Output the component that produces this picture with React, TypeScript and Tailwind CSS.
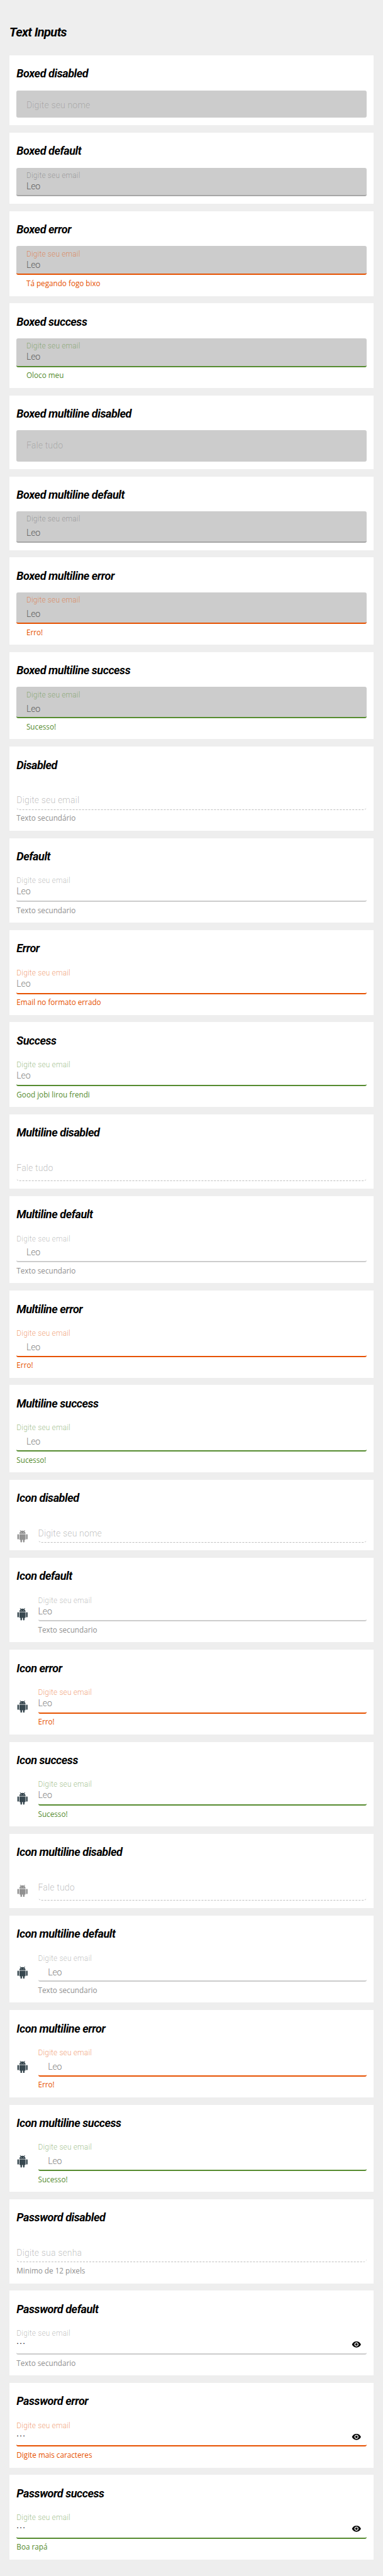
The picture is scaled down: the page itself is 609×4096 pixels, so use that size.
import { MdVisibility } from "react-icons/md";
import clsx from "clsx";

type Status = "disabled" | "default" | "error" | "success";

interface Field {
  title: string;
  status: Status;
  label: string;
  helper?: string;
  boxed?: boolean;
  multiline?: boolean;
  icon?: boolean;
  password?: boolean;
}

const EMAIL = "Digite seu email";

const fields: Field[] = [
  { title: "Boxed disabled", status: "disabled", label: "Digite seu nome", boxed: true },
  { title: "Boxed default", status: "default", label: EMAIL, boxed: true },
  { title: "Boxed error", status: "error", label: EMAIL, boxed: true, helper: "Tá pegando fogo bixo" },
  { title: "Boxed success", status: "success", label: EMAIL, boxed: true, helper: "Oloco meu" },
  { title: "Boxed multiline disabled", status: "disabled", label: "Fale tudo", boxed: true, multiline: true },
  { title: "Boxed multiline default", status: "default", label: EMAIL, boxed: true, multiline: true },
  { title: "Boxed multiline error", status: "error", label: EMAIL, boxed: true, multiline: true, helper: "Erro!" },
  { title: "Boxed multiline success", status: "success", label: EMAIL, boxed: true, multiline: true, helper: "Sucesso!" },
  { title: "Disabled", status: "disabled", label: EMAIL, helper: "Texto secundário" },
  { title: "Default", status: "default", label: EMAIL, helper: "Texto secundario" },
  { title: "Error", status: "error", label: EMAIL, helper: "Email no formato errado" },
  { title: "Success", status: "success", label: EMAIL, helper: "Good jobi lirou frendi" },
  { title: "Multiline disabled", status: "disabled", label: "Fale tudo", multiline: true },
  { title: "Multiline default", status: "default", label: EMAIL, multiline: true, helper: "Texto secundario" },
  { title: "Multiline error", status: "error", label: EMAIL, multiline: true, helper: "Erro!" },
  { title: "Multiline success", status: "success", label: EMAIL, multiline: true, helper: "Sucesso!" },
  { title: "Icon disabled", status: "disabled", label: "Digite seu nome", icon: true },
  { title: "Icon default", status: "default", label: EMAIL, icon: true, helper: "Texto secundario" },
  { title: "Icon error", status: "error", label: EMAIL, icon: true, helper: "Erro!" },
  { title: "Icon success", status: "success", label: EMAIL, icon: true, helper: "Sucesso!" },
  { title: "Icon multiline disabled", status: "disabled", label: "Fale tudo", icon: true, multiline: true },
  { title: "Icon multiline default", status: "default", label: EMAIL, icon: true, multiline: true, helper: "Texto secundario" },
  { title: "Icon multiline error", status: "error", label: EMAIL, icon: true, multiline: true, helper: "Erro!" },
  { title: "Icon multiline success", status: "success", label: EMAIL, icon: true, multiline: true, helper: "Sucesso!" },
  { title: "Password disabled", status: "disabled", label: "Digite sua senha", password: true, helper: "Minimo de 12 pixels" },
  { title: "Password default", status: "default", label: EMAIL, password: true, helper: "Texto secundario" },
  { title: "Password error", status: "error", label: EMAIL, password: true, helper: "Digite mais caracteres" },
  { title: "Password success", status: "success", label: EMAIL, password: true, helper: "Boa rapá" },
];

const labelColor: Record<Status, string> = {
  disabled: "text-black/25",
  default: "text-black/28",
  error: "text-[#e65100]/55",
  success: "text-[#558b2f]/55",
};

const helperColor: Record<Status, string> = {
  disabled: "text-[#8f8f8f]",
  default: "text-[#8f8f8f]",
  error: "text-[#e65100]",
  success: "text-[#558b2f]",
};

const lineColor: Record<Status, string> = {
  disabled: "border-black/25",
  default: "border-[#ccc]",
  error: "border-[#e65100]",
  success: "border-[#558b2f]",
};

function AndroidIcon({ className }: { className?: string }) {
  return (
    <svg viewBox="0 0 24 24" fill="currentColor" className={className}>
      <path d="M6 18c0 .55.45 1 1 1h1v3.5c0 .83.67 1.5 1.5 1.5s1.5-.67 1.5-1.5V19h2v3.5c0 .83.67 1.5 1.5 1.5s1.5-.67 1.5-1.5V19h1c.55 0 1-.45 1-1V8H6v10zM3.5 8C2.67 8 2 8.67 2 9.5v7c0 .83.67 1.5 1.5 1.5S5 17.33 5 16.5v-7C5 8.67 4.33 8 3.5 8zm17 0c-.83 0-1.5.67-1.5 1.5v7c0 .83.67 1.5 1.5 1.5s1.5-.67 1.5-1.5v-7c0-.83-.67-1.5-1.5-1.5zm-4.97-5.84l1.3-1.3c.2-.2.2-.51 0-.71-.2-.2-.51-.2-.71 0l-1.48 1.48C13.85 1.23 12.95 1 12 1c-.96 0-1.86.23-2.66.63L7.85.15c-.2-.2-.51-.2-.71 0-.2.2-.2.51 0 .71l1.31 1.31C6.97 3.26 6 5.01 6 7h12c0-1.99-.97-3.75-2.47-4.84zM10 5H9V4h1v1zm5 0h-1V4h1v1z" />
    </svg>
  );
}

function TextInput({ status, label, boxed, multiline, password }: Field) {
  const disabled = status === "disabled";
  return (
    <div
      className={clsx(
        "flex justify-between",
        boxed ? "rounded-[3px] bg-[#ccc] px-4" : "bg-transparent",
        disabled && !boxed && "rounded-b-[5px] border-b border-dashed",
        !disabled && "rounded-b-[3px] border-b-[2.1px]",
        !(disabled && boxed) && (boxed && status === "default" ? "border-[#a6a6a6]" : lineColor[status]),
        disabled && boxed && (multiline ? "h-[51px]" : "h-[45px]"),
        disabled && !boxed && (multiline ? "h-[52px]" : "h-[46px]"),
        !disabled && (multiline ? "h-[51px]" : "h-[47px]"),
      )}
    >
      {disabled ? (
        <span
          className={clsx(
            "text-[14.5px] leading-5 font-light tracking-[0.1px]",
            boxed ? "pt-[14.6px] text-black/20" : "pt-[20.6px] text-black/28",
          )}
        >
          {label}
        </span>
      ) : (
        <div className="flex flex-col pt-[6.4px]">
          <span className={clsx("text-[12.3px] leading-[14px] font-light tracking-[0.14px]", labelColor[status])}>
            {label}
          </span>
          {password ? (
            <span className="pt-[0.6px] text-[14.5px] leading-5 tracking-[1.3px] text-black">···</span>
          ) : (
            <span
              className={clsx(
                "text-[14.5px] leading-5 font-light tracking-[-0.2px]",
                boxed ? "text-black/60" : "text-black/55",
                multiline ? "pt-[5.3px]" : "pt-[0.3px]",
                multiline && !boxed && "pl-4",
              )}
            >
              Leo
            </span>
          )}
        </div>
      )}
      {password && !disabled && <MdVisibility className="mt-[23px] mr-2 size-4 text-black" />}
    </div>
  );
}

function Card(field: Field) {
  const { title, status, helper, boxed, icon } = field;
  return (
    <section className="bg-white px-3">
      <h2 className="h-[57px] pt-[17.9px] text-[18.5px] leading-6 font-bold tracking-[-0.45px] italic">{title}</h2>
      <div className="flex">
        {icon && (
          <div className="w-[35px] shrink-0 pt-[25.7px]">
            <AndroidIcon className={clsx("size-5", status === "disabled" ? "text-[#919191]" : "text-[#37474f]")} />
          </div>
        )}
        <div className="flex-1">
          <TextInput {...field} />
          {helper ? (
            <p
              className={clsx(
                "h-[34px] pt-[5.8px] font-['Open_Sans',sans-serif] text-[12px] leading-4",
                boxed && "pl-4",
                helperColor[status],
              )}
            >
              {helper}
            </p>
          ) : (
            <div className="h-3" />
          )}
        </div>
      </div>
    </section>
  );
}

export default function App() {
  return (
    <div className="min-h-[4096px] bg-[#eee]">
      <main className="flex flex-col px-[15px] font-['Roboto',sans-serif] text-black [zoom:0.9765]">
        <h1 className="h-[90px] pt-[39.3px] text-[20.5px] leading-7 font-bold tracking-[-0.6px] italic">Text Inputs</h1>
        <div className="flex flex-col gap-3">
          {fields.map((field) => (
            <Card key={field.title} {...field} />
          ))}
        </div>
      </main>
    </div>
  );
}
